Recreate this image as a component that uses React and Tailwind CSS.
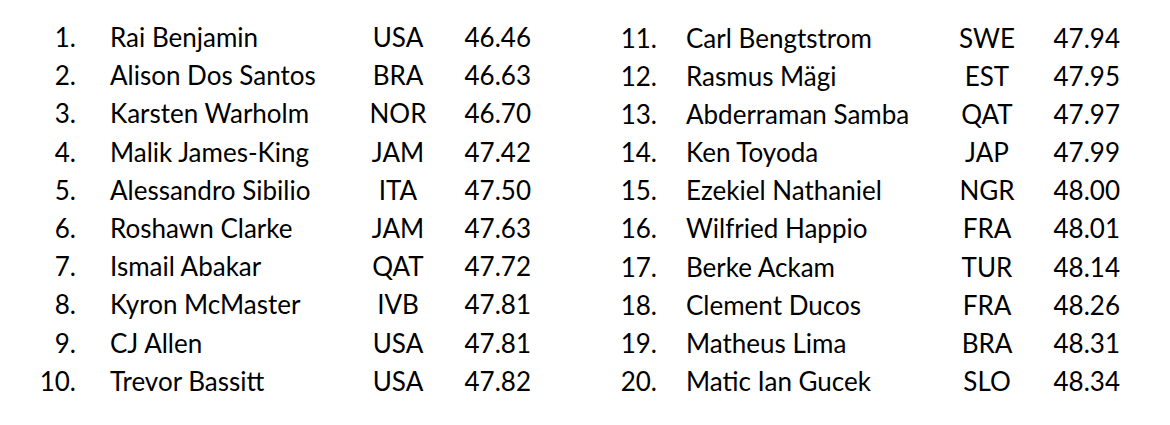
const left = [
  ['1.', 'Rai Benjamin', 'USA', '46.46'],
  ['2.', 'Alison Dos Santos', 'BRA', '46.63'],
  ['3.', 'Karsten Warholm', 'NOR', '46.70'],
  ['4.', 'Malik James-King', 'JAM', '47.42'],
  ['5.', 'Alessandro Sibilio', 'ITA', '47.50'],
  ['6.', 'Roshawn Clarke', 'JAM', '47.63'],
  ['7.', 'Ismail Abakar', 'QAT', '47.72'],
  ['8.', 'Kyron McMaster', 'IVB', '47.81'],
  ['9.', 'CJ Allen', 'USA', '47.81'],
  ['10.', 'Trevor Bassitt', 'USA', '47.82'],
];

const right = [
  ['11.', 'Carl Bengtstrom', 'SWE', '47.94'],
  ['12.', 'Rasmus Mägi', 'EST', '47.95'],
  ['13.', 'Abderraman Samba', 'QAT', '47.97'],
  ['14.', 'Ken Toyoda', 'JAP', '47.99'],
  ['15.', 'Ezekiel Nathaniel', 'NGR', '48.00'],
  ['16.', 'Wilfried Happio', 'FRA', '48.01'],
  ['17.', 'Berke Ackam', 'TUR', '48.14'],
  ['18.', 'Clement Ducos', 'FRA', '48.26'],
  ['19.', 'Matheus Lima', 'BRA', '48.31'],
  ['20.', 'Matic Ian Gucek', 'SLO', '48.34'],
];

function Table({ rows, cols, namePad }) {
  return (
    <div className={`grid ${cols}`}>
      {rows.map(([rank, name, nat, time]) => (
        <div key={rank} className="contents">
          <div className="text-right">{rank}</div>
          <div className={namePad}>{name}</div>
          <div className="text-center">{nat}</div>
          <div className="text-right">{time}</div>
        </div>
      ))}
    </div>
  );
}

export default function App() {
  return (
    <div
      className="w-[1170px] h-[425px] bg-white text-black text-[26px] leading-[38.1px] pt-[18px]"
      style={{ fontFamily: 'Lato, "Open Sans", sans-serif' }}
    >
      <div className="flex">
        <Table rows={left} cols="grid-cols-[76px_284px_76px_95px]" namePad="pl-[34px]" />
        <div className="ml-[89px] pt-[1px]">
          <Table rows={right} cols="grid-cols-[37px_292px_76px_95px]" namePad="pl-[29px]" />
        </div>
      </div>
    </div>
  );
}
